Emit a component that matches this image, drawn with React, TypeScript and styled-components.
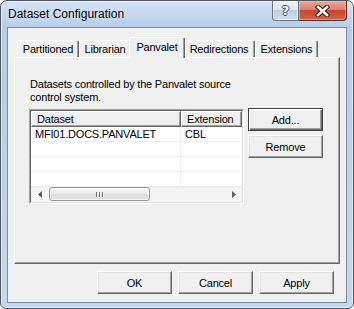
import React from "react";
import styled, { createGlobalStyle } from "styled-components";

const GlobalStyle = createGlobalStyle`
    html, body {
        margin: 0;
        padding: 0;
        background: #ffffff;
    }
    body {
        font-family: "Liberation Sans", Arial, sans-serif;
    }
    * {
        box-sizing: border-box;
    }
`;

const tabs = [
    { label: "Partitioned", width: 62 },
    { label: "Librarian", width: 52 },
    { label: "Panvalet", width: 52, active: true },
    { label: "Redirections", width: 72 },
    { label: "Extensions", width: 63 },
];

const rows = [
    { dataset: "MFI01.DOCS.PANVALET", extension: "CBL" },
    { dataset: "", extension: "" },
    { dataset: "", extension: "" },
    { dataset: "", extension: "" },
];

const App: React.FC = () => {
    return (
        <>
            <GlobalStyle />
            <Window>
                <TitleBar>
                    <Title>Dataset Configuration</Title>
                    <CaptionButtons>
                        <HelpButton>?</HelpButton>
                        <CloseButton>
                            <svg width="15" height="12" viewBox="0 0 15 12">
                                <path
                                    d="M3 2 L12 10 M12 2 L3 10"
                                    stroke="#3b1a14"
                                    strokeWidth="4.6"
                                    strokeLinecap="square"
                                />
                                <path
                                    d="M3 2 L12 10 M12 2 L3 10"
                                    stroke="#ffffff"
                                    strokeWidth="2.6"
                                    strokeLinecap="square"
                                />
                            </svg>
                        </CloseButton>
                    </CaptionButtons>
                </TitleBar>
                <Client>
                    <TabStrip>
                        {tabs.map((t) => (
                            <Tab key={t.label} $w={t.width} $active={t.active}>
                                {t.label}
                            </Tab>
                        ))}
                    </TabStrip>
                    <TabPanel>
                        <Description>
                            Datasets controlled by the Panvalet source
                            <br />
                            control system.
                        </Description>
                        <ListRow>
                            <ListView>
                                <ListInner>
                                    <HeaderRow>
                                        <HeaderCell $w={150}>Dataset</HeaderCell>
                                        <HeaderCell $w={61}>Extension</HeaderCell>
                                    </HeaderRow>
                                    <Rows>
                                        {rows.map((r, i) => (
                                            <Row key={i}>
                                                <Cell $w={150} $divider>
                                                    {r.dataset}
                                                </Cell>
                                                <Cell $w={61}>{r.extension}</Cell>
                                            </Row>
                                        ))}
                                    </Rows>
                                    <HScroll>
                                        <ArrowButton>
                                            <svg width="4" height="7" viewBox="0 0 4 7">
                                                <path d="M4 0 L0 3.5 L4 7 Z" fill="#5a5a5a" />
                                            </svg>
                                        </ArrowButton>
                                        <Thumb>
                                            <Grip />
                                            <Grip />
                                            <Grip />
                                        </Thumb>
                                        <Track />
                                        <ArrowButton>
                                            <svg width="4" height="7" viewBox="0 0 4 7">
                                                <path d="M0 0 L4 3.5 L0 7 Z" fill="#5a5a5a" />
                                            </svg>
                                        </ArrowButton>
                                    </HScroll>
                                </ListInner>
                            </ListView>
                            <SideButtons>
                                <Button $default>Add...</Button>
                                <Button>Remove</Button>
                            </SideButtons>
                        </ListRow>
                    </TabPanel>
                    <Footer>
                        <Button>OK</Button>
                        <Button>Cancel</Button>
                        <Button>Apply</Button>
                    </Footer>
                </Client>
            </Window>
        </>
    );
};

export default App;

const Window = styled.div`
    width: 354px;
    height: 309px;
    display: flex;
    flex-direction: column;
    padding: 0 6px 5px 6px;
    border: 1px solid #4f565e;
    border-radius: 7px 7px 6px 6px;
    background: linear-gradient(
        to bottom,
        #d3e2f3 0px,
        #b6cde9 26px,
        #bcd3ec 60%,
        #c3d8ef 100%
    );
    box-shadow: inset 0 0 0 1px rgba(255, 255, 255, 0.55);
    overflow: hidden;
`;

const TitleBar = styled.div`
    height: 26px;
    display: flex;
    justify-content: space-between;
    align-items: flex-start;
    flex-shrink: 0;
`;

const Title = styled.div`
    padding-left: 1px;
    line-height: 27px;
    font-size: 12px;
    color: #000000;
    text-shadow: 0 0 6px rgba(255, 255, 255, 0.9);
`;

const CaptionButtons = styled.div`
    display: flex;
    height: 20px;
`;

const HelpButton = styled.div`
    width: 27px;
    height: 20px;
    display: flex;
    align-items: center;
    justify-content: center;
    border: 1px solid #6b7787;
    border-top: none;
    border-radius: 0 0 0 4px;
    background: linear-gradient(
        to bottom,
        #edf1f7 0%,
        #dde5ef 45%,
        #c3cfdf 50%,
        #d3dde9 100%
    );
    box-shadow: inset 0 0 0 1px rgba(255, 255, 255, 0.5);
    font-family: "DejaVu Sans", sans-serif;
    font-weight: bold;
    font-size: 13px;
    color: #ffffff;
    text-shadow: 1px 0 0 #3f4a58, -1px 0 0 #3f4a58, 0 1px 0 #3f4a58,
        0 -1px 0 #3f4a58;
`;

const CloseButton = styled.div`
    width: 48px;
    height: 20px;
    display: flex;
    align-items: center;
    justify-content: center;
    border: 1px solid #5e2a22;
    border-top: none;
    border-left: none;
    border-radius: 0 0 4px 0;
    background: linear-gradient(
        to bottom,
        #eaa899 0%,
        #d9826f 45%,
        #c6462f 50%,
        #d16548 100%
    );
    box-shadow: inset 0 0 0 1px rgba(255, 210, 200, 0.45);
`;

const Client = styled.div`
    flex: 1;
    display: flex;
    flex-direction: column;
    padding: 9px 6px 8px 6px;
    border: 1px solid #7c8ea7;
    background: #f0f0f0;
    font-size: 11px;
    letter-spacing: -0.2px;
    color: #000000;
`;

const TabStrip = styled.div`
    height: 20px;
    display: flex;
    align-items: flex-end;
    padding-left: 3px;
    position: relative;
    z-index: 1;
    flex-shrink: 0;
`;

const Tab = styled.div<{ $w: number; $active?: boolean }>`
    width: ${({ $w, $active }) => ($active ? $w + 4 : $w)}px;
    height: ${({ $active }) => ($active ? 21 : 17)}px;
    margin: ${({ $active }) => ($active ? "0 -2px -1px -2px" : "0")};
    padding-bottom: ${({ $active }) => ($active ? 2 : 0)}px;
    position: relative;
    z-index: ${({ $active }) => ($active ? 2 : 1)};
    display: flex;
    align-items: center;
    justify-content: center;
    background: #f0f0f0;
    border-top: 1px solid #ffffff;
    border-left: 1px solid #ffffff;
    border-right: 1px solid #696969;
    border-radius: 2px 2px 0 0;
    box-shadow: inset -1px 0 0 #a0a0a0;
    white-space: nowrap;
`;

const TabPanel = styled.div`
    height: 207px;
    flex-shrink: 0;
    padding: 20px 0 0 14px;
    border-top: 1px solid #ffffff;
    border-left: 1px solid #ffffff;
    border-right: 1px solid #696969;
    border-bottom: 1px solid #696969;
    box-shadow: inset -1px -1px 0 #a0a0a0;
`;

const Description = styled.p`
    margin: 0 0 5px 1px;
    line-height: 13px;
`;

const ListRow = styled.div`
    display: flex;
    align-items: flex-start;
    gap: 4px;
`;

const ListView = styled.div`
    width: 215px;
    height: 95px;
    border: 1px solid;
    border-color: #a0a0a0 #ffffff #ffffff #a0a0a0;
`;

const ListInner = styled.div`
    height: 100%;
    display: flex;
    flex-direction: column;
    border: 1px solid;
    border-color: #696969 #e3e3e3 #e3e3e3 #696969;
    background: #ffffff;
    overflow: hidden;
`;

const HeaderRow = styled.div`
    display: flex;
    height: 16px;
    flex-shrink: 0;
`;

const HeaderCell = styled.div<{ $w: number }>`
    width: ${({ $w }) => $w}px;
    padding-left: 5px;
    line-height: 14px;
    background: #f0f0f0;
    border-top: 1px solid #ffffff;
    border-left: 1px solid #ffffff;
    border-right: 1px solid #696969;
    border-bottom: 1px solid #696969;
    box-shadow: inset -1px -1px 0 #a0a0a0;
`;

const Rows = styled.div`
    flex: 1;
    overflow: hidden;
`;

const Row = styled.div`
    display: flex;
    height: 15px;
    border-bottom: 1px solid #f0f0f0;
`;

const Cell = styled.div<{ $w: number; $divider?: boolean }>`
    width: ${({ $w }) => $w}px;
    padding-left: 4px;
    line-height: 14px;
    border-right: ${({ $divider }) => ($divider ? "1px solid #f0f0f0" : "none")};
    white-space: nowrap;
`;

const HScroll = styled.div`
    height: 16px;
    flex-shrink: 0;
    display: flex;
    align-items: stretch;
    background: linear-gradient(to bottom, #e9e9e9 0px, #f5f5f5 3px, #f5f5f5 100%);
`;

const ArrowButton = styled.div`
    width: 17px;
    display: flex;
    align-items: center;
    justify-content: center;
`;

const Thumb = styled.div`
    width: 101px;
    margin: 1px 0 1px 1px;
    display: flex;
    align-items: center;
    justify-content: center;
    gap: 1px;
    border: 1px solid #979797;
    border-radius: 3px;
    background: linear-gradient(
        to bottom,
        #f6f6f6 0%,
        #ececec 50%,
        #dcdcdc 51%,
        #e2e2e2 100%
    );
    box-shadow: inset 0 0 0 1px rgba(255, 255, 255, 0.7);
`;

const Grip = styled.span`
    width: 1px;
    height: 5px;
    background: #6a6a6a;
    box-shadow: 1px 0 0 #ffffff;
    margin-right: 1px;
`;

const Track = styled.div`
    flex: 1;
`;

const SideButtons = styled.div`
    display: flex;
    flex-direction: column;
    gap: 4px;
    margin-top: -1px;
`;

const Button = styled.button<{ $default?: boolean }>`
    width: 75px;
    height: 23px;
    padding: 0;
    font-family: "Liberation Sans", Arial, sans-serif;
    font-size: 11px;
    letter-spacing: -0.2px;
    color: #000000;
    background: #f0f0f0;
    border: 1px solid;
    border-color: ${({ $default }) =>
        $default ? "#404040" : "#ffffff #696969 #696969 #ffffff"};
    box-shadow: ${({ $default }) =>
        $default
            ? "inset 1px 1px 0 #ffffff, inset -1px -1px 0 #696969, inset -2px -2px 0 #a0a0a0"
            : "inset -1px -1px 0 #a0a0a0, inset 1px 1px 0 #e3e3e3"};
    cursor: pointer;
`;

const Footer = styled.div`
    display: flex;
    justify-content: flex-end;
    gap: 6px;
    margin-top: 7px;
    padding-right: 6px;
`;
